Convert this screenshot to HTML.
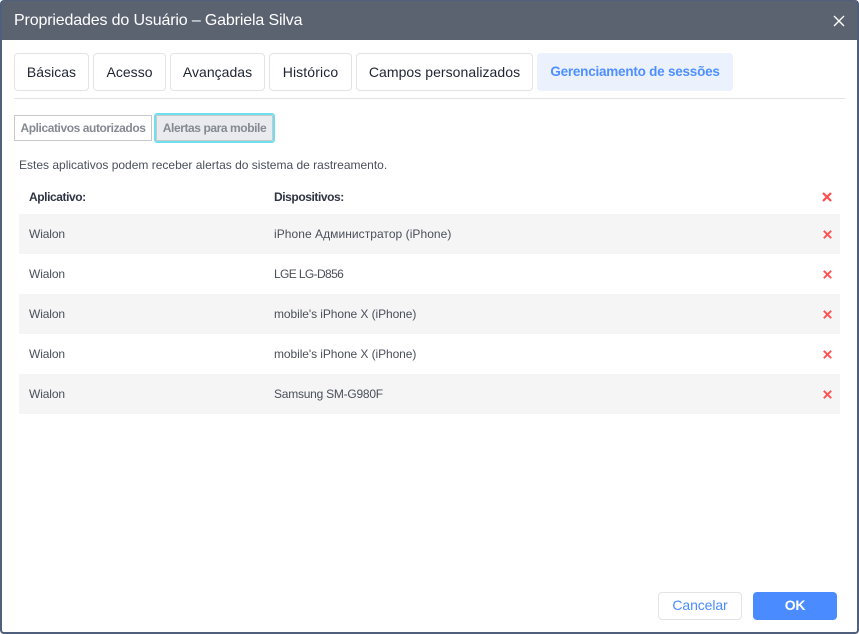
<!DOCTYPE html>
<html><head><meta charset="utf-8"><style>
html,body{margin:0;padding:0;width:859px;height:634px;overflow:hidden;background:#fff;font-family:"Liberation Sans",sans-serif;}
.a{position:absolute;box-sizing:border-box;white-space:nowrap;}
.frame{left:0;top:0;width:859px;height:634px;border:2px solid #4f5f7c;border-top-width:1px;border-radius:4px;z-index:5;pointer-events:none;}
.head{left:1px;top:1px;width:857px;height:39px;background:#5b6270;color:#fff;font-size:16px;line-height:39px;padding-left:13px;letter-spacing:-.15px;}
.tab{top:53px;height:38px;border:1px solid #e3e3e3;border-radius:4px;font-size:14px;line-height:36px;text-align:center;color:#1f2433;letter-spacing:.02px;}
.t{font-size:12px;color:#4a4f5a;line-height:14px;letter-spacing:-.12px;}
.b{font-weight:bold;color:#2e3442;letter-spacing:-.42px;}
.row{left:19px;width:821px;height:40px;background:#f5f5f5;}
svg{position:absolute;}
</style></head><body>
<div class="a frame"></div>
<div class="a head">Propriedades do Usuário – Gabriela Silva</div>
<svg style="left:833px;top:15px" width="12" height="12" viewBox="0 0 12 12"><path d="M1 1L11 11M11 1L1 11" stroke="#fff" stroke-width="1.4" fill="none"/></svg>

<div class="a tab" style="left:14px;width:75px">Básicas</div>
<div class="a tab" style="left:93px;width:73px">Acesso</div>
<div class="a tab" style="left:170px;width:95px">Avançadas</div>
<div class="a tab" style="left:269px;width:83px;letter-spacing:.12px">Histórico</div>
<div class="a tab" style="left:356px;width:177px;letter-spacing:.05px">Campos personalizados</div>
<div class="a tab" style="left:537px;width:196px;background:#ebf2fe;border-color:#ebf2fe;color:#4f8fff;font-weight:bold;font-size:13.5px;letter-spacing:-.23px">Gerenciamento de sessões</div>
<div class="a" style="left:14px;top:98px;width:831px;height:1px;background:#e3e3e3"></div>

<div class="a" style="left:14px;top:115px;width:138px;height:26px;border:1px solid #c9c9c9;font-size:12px;line-height:24px;text-align:center;color:#858992;font-weight:bold;letter-spacing:-.42px">Aplicativos autorizados</div>
<div class="a" style="left:154px;top:113px;width:121px;height:30px;border:1px solid #6fdeee;box-shadow:inset 0 0 0 1px #6fdeee;border-radius:3px"></div>
<div class="a" style="left:156px;top:115px;width:117px;height:26px;border:1px solid #c9c9c9;background:#e9ebee;font-size:12px;line-height:24px;text-align:center;color:#858992;font-weight:bold;letter-spacing:-.42px">Alertas para mobile</div>

<div class="a t" style="left:19px;top:158px;letter-spacing:0">Estes aplicativos podem receber alertas do sistema de rastreamento.</div>

<div class="a t b" style="left:29px;top:190px">Aplicativo:</div>
<div class="a t b" style="left:274px;top:190px">Dispositivos:</div>
<svg style="left:822px;top:192px" width="10" height="10" viewBox="0 0 10 10"><path d="M1 1L9 9M9 1L1 9" stroke="#ff4d4d" stroke-width="2.2" fill="none"/></svg>

<div class="a row" style="top:214px"></div>
<div class="a row" style="top:294px"></div>
<div class="a row" style="top:374px"></div>

<div class="a t" style="left:29px;top:227px">Wialon</div><div class="a t" style="left:274px;top:227px;letter-spacing:.05px">iPhone Администратор (iPhone)</div>
<div class="a t" style="left:29px;top:267px">Wialon</div><div class="a t" style="left:274px;top:267px;letter-spacing:-.62px">LGE LG-D856</div>
<div class="a t" style="left:29px;top:307px">Wialon</div><div class="a t" style="left:274px;top:307px;letter-spacing:-.08px">mobile's iPhone X (iPhone)</div>
<div class="a t" style="left:29px;top:347px">Wialon</div><div class="a t" style="left:274px;top:347px;letter-spacing:-.08px">mobile's iPhone X (iPhone)</div>
<div class="a t" style="left:29px;top:387px">Wialon</div><div class="a t" style="left:274px;top:387px;letter-spacing:-.24px">Samsung SM-G980F</div>

<svg style="left:823px;top:230px" width="9" height="9" viewBox="0 0 9 9"><path d="M.8 .8L8.2 8.2M8.2 .8L.8 8.2" stroke="#ff5252" stroke-width="1.9" fill="none"/></svg>
<svg style="left:823px;top:270px" width="9" height="9" viewBox="0 0 9 9"><path d="M.8 .8L8.2 8.2M8.2 .8L.8 8.2" stroke="#ff5252" stroke-width="1.9" fill="none"/></svg>
<svg style="left:823px;top:310px" width="9" height="9" viewBox="0 0 9 9"><path d="M.8 .8L8.2 8.2M8.2 .8L.8 8.2" stroke="#ff5252" stroke-width="1.9" fill="none"/></svg>
<svg style="left:823px;top:350px" width="9" height="9" viewBox="0 0 9 9"><path d="M.8 .8L8.2 8.2M8.2 .8L.8 8.2" stroke="#ff5252" stroke-width="1.9" fill="none"/></svg>
<svg style="left:823px;top:390px" width="9" height="9" viewBox="0 0 9 9"><path d="M.8 .8L8.2 8.2M8.2 .8L.8 8.2" stroke="#ff5252" stroke-width="1.9" fill="none"/></svg>

<div class="a" style="left:658px;top:592px;width:84px;height:28px;border:1px solid #e3e3e3;border-radius:4px;font-size:14px;line-height:25px;text-align:center;color:#4a8cff;letter-spacing:-.1px">Cancelar</div>
<div class="a" style="left:753px;top:592px;width:84px;height:28px;background:#4a8cff;border-radius:4px;font-size:14px;line-height:27px;text-align:center;color:#fff;font-weight:bold;letter-spacing:-.3px">OK</div>
</body></html>
